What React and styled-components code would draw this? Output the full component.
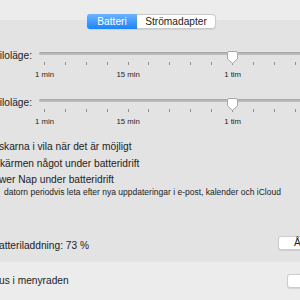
import React from 'react'
import styled, { createGlobalStyle } from 'styled-components'

const GlobalStyle = createGlobalStyle`
    html, body {
        margin: 0;
        padding: 0;
        background: #e3e3e3;
        overflow: hidden;
    }
    body {
        font-family: 'Liberation Sans', Arial, sans-serif;
        color: #222;
    }
`

const Window = styled.div`
    width: 300px;
    height: 300px;
    overflow: hidden;
    display: flex;
    flex-direction: column;
    background: #e3e3e3;
`

const Header = styled.div`
    display: flex;
    justify-content: center;
    padding: 14px 0 0 3px;
    background: linear-gradient(to bottom, #ececec 20px, #e3e3e3 20px);
`

const Segmented = styled.div`
    display: flex;
    height: 15px;
    background: #fff;
    border: 1px solid #c9c9c9;
    border-radius: 4px;
    box-sizing: border-box;
    box-shadow: 0 0.5px 1px rgba(0, 0, 0, 0.08);
`

const Segment = styled.div`
    display: flex;
    align-items: center;
    justify-content: center;
    width: ${p => p.$w}px;
    font-size: 10.2px;
    line-height: 13px;
    color: ${p => (p.$active ? '#fff' : '#222')};
    background: ${p => (p.$active ? 'linear-gradient(#6db4fb, #1a83fb)' : 'transparent')};
    border-radius: ${p => (p.$active ? '3px 0 0 3px' : '0')};
    margin: ${p => (p.$active ? '-1px 0 -1px -1px' : '0')};
    height: ${p => (p.$active ? '15px' : 'auto')};
`

const Panel = styled.div`
    display: flex;
    flex-direction: column;
    flex: 1;
`

const SliderRow = styled.div`
    display: grid;
    grid-template-columns: 32px 1fr;
    column-gap: 7px;
    margin-top: ${p => p.$top}px;
`

const SliderLabel = styled.div`
    display: flex;
    justify-content: flex-end;
    white-space: nowrap;
    font-size: 10.2px;
    line-height: 12px;
    margin-top: 3px;
`

const Slider = styled.div`
    position: relative;
    display: flex;
    flex-direction: column;
    min-width: 0;
`

const Track = styled.div`
    margin-top: 5px;
    height: 3px;
    border-radius: 2px 0 0 2px;
    background: linear-gradient(#a6a6a6, #c4c4c4);
`

const Ticks = styled.div`
    display: flex;
    gap: 19.9px;
    margin-top: 7px;
    padding-left: 5px;
    height: 3px;
    overflow: hidden;
`

const Tick = styled.span`
    flex: 0 0 1px;
    background: #8e8e8e;
`

const TickLabels = styled.div`
    position: relative;
    margin-top: 5px;
    height: 10px;
`

const TickLabel = styled.span`
    position: absolute;
    top: 0;
    transform: translateX(-50%);
    white-space: nowrap;
    font-size: 7.8px;
    line-height: 10px;
    color: #262626;
`

const Thumb = styled.svg`
    position: absolute;
    top: 4px;
    left: 188px;
`

const Checks = styled.div`
    display: flex;
    flex-direction: column;
    margin-top: 11px;
`

const CheckText = styled.div`
    font-size: 10.2px;
    line-height: ${p => p.$lh}px;
    white-space: nowrap;
    margin-left: ${p => p.$indent}px;
`

const SubText = styled.div`
    font-size: 8.5px;
    line-height: 11px;
    white-space: nowrap;
    margin-left: 4px;
`

const ButtonRow = styled.div`
    display: grid;
    grid-template-columns: ${p => p.$col}px max-content;
    align-items: start;
    margin-top: ${p => p.$top}px;
`

const RowText = styled.div`
    font-size: 10.2px;
    line-height: 14px;
    white-space: nowrap;
    margin: ${p => p.$offset}px 0 0 -1px;
`

const PushButton = styled.div`
    height: 14px;
    box-sizing: border-box;
    padding: 0 ${p => p.$pad}px;
    background: #fff;
    border: 1px solid #cdcdcd;
    border-radius: 3px;
    font-size: 10.2px;
    line-height: 12px;
    white-space: nowrap;
    box-shadow: 0 0.5px 1px rgba(0, 0, 0, 0.1);
`

const Footer = styled.div`
    background: #ececec;
    height: 38px;
    padding-top: 12px;
    box-sizing: border-box;
`

const TICK_GAP = 20.9
const tickCount = 14
const labels = [
    { i: 0, text: '1 min' },
    { i: 4, text: '15 min' },
    { i: 9, text: '1 tim' },
]

const SleepSlider = ({ label, top }) => (
    <SliderRow $top={top}>
        <SliderLabel>{label}</SliderLabel>
        <Slider>
            <Track />
            <Ticks>
                {Array.from({ length: tickCount }).map((_, i) => <Tick key={i} />)}
            </Ticks>
            <TickLabels>
                {labels.map(l => (
                    <TickLabel key={l.text} style={{ left: `${5.5 + l.i * TICK_GAP}px` }}>{l.text}</TickLabel>
                ))}
            </TickLabels>
            <Thumb width="11" height="13" viewBox="0 0 11 13">
                <path d="M2 0.5 H9 A1.5 1.5 0 0 1 10.5 2 V8 L5.5 12.3 L0.5 8 V2 A1.5 1.5 0 0 1 2 0.5 Z" fill="#fff" stroke="#a9a9a9" strokeWidth="1" />
            </Thumb>
        </Slider>
    </SliderRow>
)

const App = () => {
    return (
        <Window>
            <GlobalStyle />
            <Header>
                <Segmented>
                    <Segment $active $w={50}>Batteri</Segment>
                    <Segment $w={78}>Strömadapter</Segment>
                </Segmented>
            </Header>
            <Panel>
                <SleepSlider label="Datorns viloläge:" top={18} />
                <SleepSlider label="Bildskärmens viloläge:" top={14} />
                <Checks>
                    <CheckText $lh={17} $indent={-1}>skarna i vila när det är möjligt</CheckText>
                    <CheckText $lh={17} $indent={0}>kärmen något under batteridrift</CheckText>
                    <CheckText $lh={15} $indent={-1}>wer Nap under batteridrift</CheckText>
                    <SubText>datorn periodvis leta efter nya uppdateringar i e-post, kalender och iCloud</SubText>
                </Checks>
                <ButtonRow $col={278} $top={38}>
                    <RowText $offset={3}>atteriladdning: 73 %</RowText>
                    <PushButton $pad={15}>Återställ standard</PushButton>
                </ButtonRow>
            </Panel>
            <Footer>
                <ButtonRow $col={287} $top={0}>
                    <RowText $offset={0}>us i menyraden</RowText>
                    <PushButton $pad={16}>Schema…</PushButton>
                </ButtonRow>
            </Footer>
        </Window>
    )
}

export default App
